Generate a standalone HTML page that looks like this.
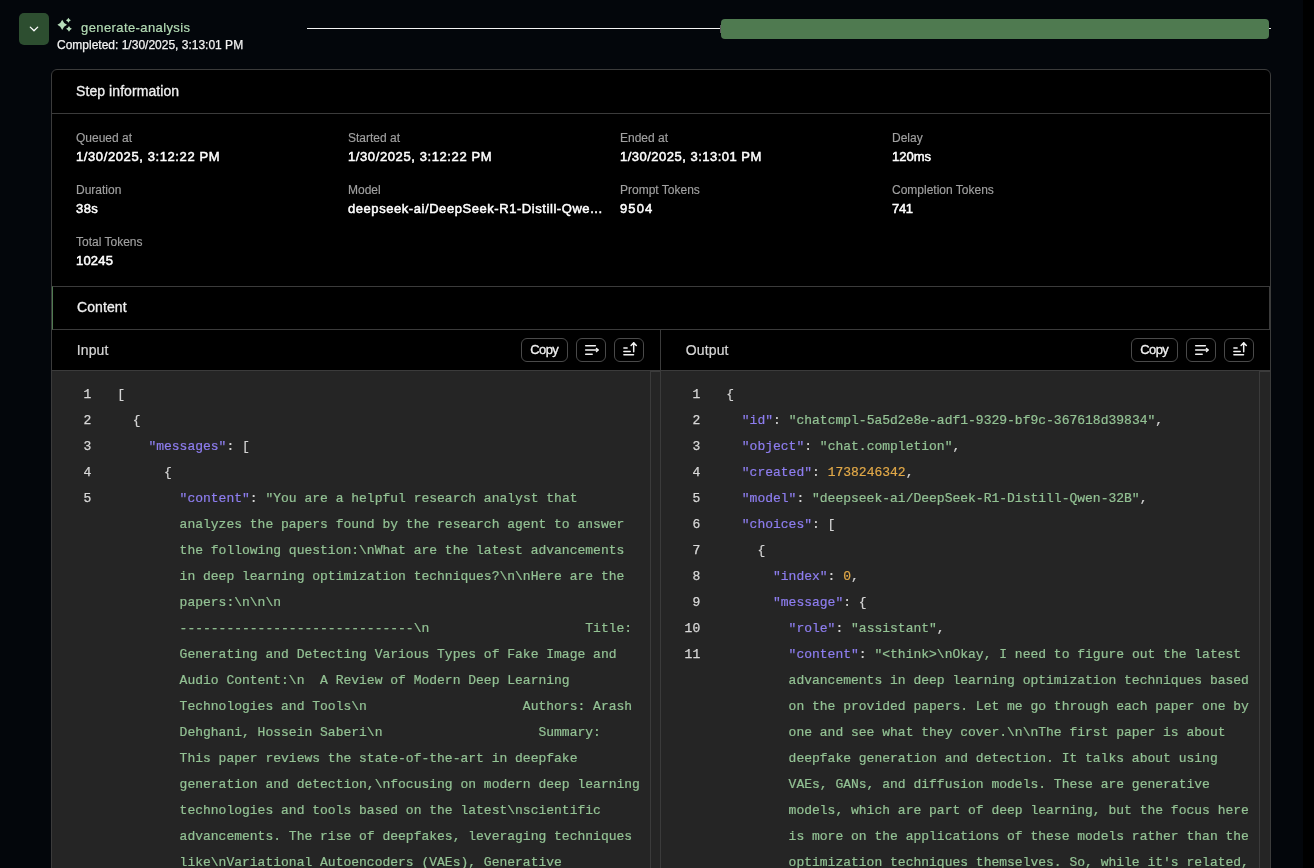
<!DOCTYPE html>
<html><head><meta charset="utf-8">
<style>
*{box-sizing:border-box;margin:0;padding:0}
html,body{width:1314px;height:868px;overflow:hidden;background:#03060b;font-family:"Liberation Sans",sans-serif}
.abs{position:absolute}
#gutter{left:1303px;top:0;width:11px;height:868px;background:#000}
#btn{left:19px;top:13px;width:30px;height:32px;border-radius:5px;background:#2d4e30}
#title{left:81px;top:20px;font-size:13px;line-height:16px;letter-spacing:0.4px;-webkit-text-stroke:0.2px #b3dbb4;color:#b3dbb4;white-space:nowrap}
#completed{left:57px;top:38px;font-size:12px;line-height:14px;color:#f2f2f2;-webkit-text-stroke:0.25px #f2f2f2;white-space:nowrap}
#tl{left:307px;top:28px;width:413px;height:1px;background:#f4f4f4}
#tlc{left:720px;top:25px;width:1px;height:8px;background:#5a5a5a}
#bar{left:721px;top:19px;width:548px;height:20px;border-radius:4px;background:#4f7a50}
#tick{left:1269px;top:28px;width:2px;height:1px;background:#e8e8e8}
#box{left:51px;top:69px;width:1220px;height:900px;border:1px solid #3b3b3b;border-radius:6px;background:#000;overflow:hidden}
.hdr{position:absolute;left:0;width:1218px;border-bottom:1px solid #3b3b3b}
.lbl{position:absolute;font-size:12px;line-height:14px;color:#a0a0a0;-webkit-text-stroke:0.15px #a0a0a0;white-space:nowrap}
.val{position:absolute;font-size:13px;line-height:15px;color:#fff;-webkit-text-stroke:0.5px #fff;white-space:nowrap}
.ph{position:absolute;font-size:14px;line-height:16px;color:#f0f0f0;-webkit-text-stroke:0.3px #f0f0f0;white-space:nowrap}
.panel{position:absolute;top:260px;width:608px;height:640px}
.pt{position:absolute;left:24.7px;top:11.5px;letter-spacing:0.15px;font-size:14px;line-height:16px;color:#d6d6d6;-webkit-text-stroke:0.2px #d6d6d6;white-space:nowrap}
.cbtn{position:absolute;top:8px;height:24px;border:1px solid #4a4a4a;border-radius:6px;background:#000}
.cbtn.copy{left:469px;width:47px;font-size:13px;line-height:21px;letter-spacing:-0.6px;text-indent:-0.6px;color:#f0f0f0;-webkit-text-stroke:0.3px #f0f0f0;text-align:center}
.cbtn svg{position:absolute;left:0;top:0}
.code{position:absolute;left:0;top:40px;width:608px;height:600px;background:#252525;border-top:1px solid #3b3b3b;overflow:hidden}
.sb{position:absolute;left:598px;top:0;width:10px;height:600px;border-left:1px solid #3b3b3b;border-top:1px solid #3b3b3b}
.lines{position:absolute;left:0;top:10.5px;width:598px}
.ln{position:absolute;left:0;width:39.2px;-webkit-text-stroke:0.25px currentColor;text-align:right;font-family:"Liberation Mono",monospace;font-size:13px;color:#d8d8d8;line-height:26px}
.cl{position:absolute;left:65.2px;-webkit-text-stroke:0.2px currentColor;font-family:"Liberation Mono",monospace;font-size:13px;color:#d4d4d4;line-height:26px;white-space:pre}
.k{color:#8e7ef0}.s{color:#93c294}.n{color:#e2a948}
#divider{position:absolute;left:608px;top:260px;width:1px;height:640px;background:#3b3b3b}
#chdr{position:absolute;left:0;top:216px;width:1218px;height:44px;border:1px solid #3b3b3b;border-left-color:#4f7a50}
</style></head><body>
<div id="root" style="position:absolute;left:0;top:0;width:1314px;height:868px;will-change:transform">
<div id="gutter" class="abs"></div>
<div id="btn" class="abs"><svg width="30" height="32" viewBox="0 0 30 32"><path d="M11.3 14.1 L15 17.8 L18.7 14.1" fill="none" stroke="#fff" stroke-width="1.3" stroke-linecap="round" stroke-linejoin="round"/></svg></div>
<svg class="abs" style="left:56px;top:16px" width="18" height="18" viewBox="0 0 18 18"><g fill="#b6dcb9">
<path d="M6.2 3.7 Q7.6 7.4 11 8.8 Q7.6 10.2 6.2 13.9 Q4.8 10.2 1.4 8.8 Q4.8 7.4 6.2 3.7Z"/>
<path d="M12.4 1.7 Q13.1 3.5 14.9 4.2 Q13.1 4.9 12.4 6.7 Q11.7 4.9 9.9 4.2 Q11.7 3.5 12.4 1.7Z"/>
<path d="M13 9.9 Q13.8 12 15.9 12.8 Q13.8 13.6 13 15.7 Q12.2 13.6 10.1 12.8 Q12.2 12 13 9.9Z"/>
</g></svg>
<div id="title" class="abs">generate-analysis</div>
<div id="completed" class="abs">Completed: 1/30/2025, 3:13:01 PM</div>
<div id="tl" class="abs"></div>
<div id="tlc" class="abs"></div>
<div id="bar" class="abs"></div>
<div id="tick" class="abs"></div>
<div id="box" class="abs">
  <div class="hdr" style="top:0;height:44px"></div>
  <div class="ph" style="left:24px;top:13px;letter-spacing:0.08px">Step information</div>
  <div class="lbl" style="left:24px;top:61px">Queued at</div>
  <div class="val" style="left:24px;top:79px;letter-spacing:0.6px">1/30/2025, 3:12:22 PM</div>
  <div class="lbl" style="left:296px;top:61px">Started at</div>
  <div class="val" style="left:296px;top:79px;letter-spacing:0.6px">1/30/2025, 3:12:22 PM</div>
  <div class="lbl" style="left:568px;top:61px">Ended at</div>
  <div class="val" style="left:568px;top:79px;letter-spacing:0.49px">1/30/2025, 3:13:01 PM</div>
  <div class="lbl" style="left:840px;top:61px">Delay</div>
  <div class="val" style="left:840px;top:79px">120ms</div>
  <div class="lbl" style="left:24px;top:113px">Duration</div>
  <div class="val" style="left:24px;top:131px;letter-spacing:0.4px">38s</div>
  <div class="lbl" style="left:296px;top:113px">Model</div>
  <div class="val" style="left:296px;top:131px;letter-spacing:0.56px">deepseek-ai/DeepSeek-R1-Distill-Qwe...</div>
  <div class="lbl" style="left:568px;top:113px">Prompt Tokens</div>
  <div class="val" style="left:568px;top:131px;letter-spacing:1.1px">9504</div>
  <div class="lbl" style="left:840px;top:113px">Completion Tokens</div>
  <div class="val" style="left:840px;top:131px;letter-spacing:-0.35px">741</div>
  <div class="lbl" style="left:24px;top:165px">Total Tokens</div>
  <div class="val" style="left:24px;top:183px;letter-spacing:0.18px">10245</div>
  <div id="chdr"></div>
  <div class="ph" style="left:25px;top:229px;letter-spacing:0.1px">Content</div>
  <div class="panel" style="left:0">
    <div class="pt">Input</div>
    <div class="cbtn copy">Copy</div>
    <div class="cbtn" style="left:524px;width:30px"><svg width="28" height="22" viewBox="0 0 28 22"><g fill="none" stroke="#f2f2f2" stroke-width="1.5" stroke-linecap="round" stroke-linejoin="round"><path d="M8.7 6.7h9.7"/><path d="M8.7 11h12.3"/><path d="M19.5 9.5l1.5 1.5-1.5 1.5"/><path d="M8.7 15.3h6.5"/></g></svg></div>
    <div class="cbtn" style="left:562px;width:30px"><svg width="28" height="22" viewBox="0 0 28 22"><g fill="none" stroke="#f2f2f2" stroke-width="1.5" stroke-linecap="round" stroke-linejoin="round"><path d="M8.9 8.9h3.2"/><path d="M8.9 12.4h6.3"/><path d="M8.9 15.7h9.6"/><path d="M18.7 12.7V3.9"/><path d="M16.1 6.5l2.6-2.6 2.6 2.6"/></g></svg></div>
    <div class="code"><div class="lines">
<div class="ln" style="top:0px">1</div>
<div class="cl" style="top:0px">[</div>
<div class="ln" style="top:26px">2</div>
<div class="cl" style="top:26px">  {</div>
<div class="ln" style="top:52px">3</div>
<div class="cl" style="top:52px">    <span class="k">&quot;messages&quot;</span>: [</div>
<div class="ln" style="top:78px">4</div>
<div class="cl" style="top:78px">      {</div>
<div class="ln" style="top:104px">5</div>
<div class="cl" style="top:104px">        <span class="k">&quot;content&quot;</span>: <span class="s">&quot;You are a helpful research analyst that</span></div>
<div class="cl" style="top:130px">        <span class="s">analyzes the papers found by the research agent to answer</span></div>
<div class="cl" style="top:156px">        <span class="s">the following question:\nWhat are the latest advancements</span></div>
<div class="cl" style="top:182px">        <span class="s">in deep learning optimization techniques?\n\nHere are the</span></div>
<div class="cl" style="top:208px">        <span class="s">papers:\n\n\n</span></div>
<div class="cl" style="top:234px">        <span class="s">------------------------------\n                    Title:</span></div>
<div class="cl" style="top:260px">        <span class="s">Generating and Detecting Various Types of Fake Image and</span></div>
<div class="cl" style="top:286px">        <span class="s">Audio Content:\n  A Review of Modern Deep Learning</span></div>
<div class="cl" style="top:312px">        <span class="s">Technologies and Tools\n                    Authors: Arash</span></div>
<div class="cl" style="top:338px">        <span class="s">Dehghani, Hossein Saberi\n                    Summary:</span></div>
<div class="cl" style="top:364px">        <span class="s">This paper reviews the state-of-the-art in deepfake</span></div>
<div class="cl" style="top:390px">        <span class="s">generation and detection,\nfocusing on modern deep learning</span></div>
<div class="cl" style="top:416px">        <span class="s">technologies and tools based on the latest\nscientific</span></div>
<div class="cl" style="top:442px">        <span class="s">advancements. The rise of deepfakes, leveraging techniques</span></div>
<div class="cl" style="top:468px">        <span class="s">like\nVariational Autoencoders (VAEs), Generative</span></div>
    </div><div class="sb"></div></div>
  </div>
  <div id="divider"></div>
  <div class="panel" style="left:609px;width:609px">
    <div class="pt">Output</div>
    <div style="position:absolute;left:1px;top:0"><div class="cbtn copy">Copy</div>
    <div class="cbtn" style="left:524px;width:30px"><svg width="28" height="22" viewBox="0 0 28 22"><g fill="none" stroke="#f2f2f2" stroke-width="1.5" stroke-linecap="round" stroke-linejoin="round"><path d="M8.7 6.7h9.7"/><path d="M8.7 11h12.3"/><path d="M19.5 9.5l1.5 1.5-1.5 1.5"/><path d="M8.7 15.3h6.5"/></g></svg></div>
    <div class="cbtn" style="left:562px;width:30px"><svg width="28" height="22" viewBox="0 0 28 22"><g fill="none" stroke="#f2f2f2" stroke-width="1.5" stroke-linecap="round" stroke-linejoin="round"><path d="M8.9 8.9h3.2"/><path d="M8.9 12.4h6.3"/><path d="M8.9 15.7h9.6"/><path d="M18.7 12.7V3.9"/><path d="M16.1 6.5l2.6-2.6 2.6 2.6"/></g></svg></div></div>
    <div class="code" style="width:609px"><div class="lines">
<div class="ln" style="top:0px">1</div>
<div class="cl" style="top:0px">{</div>
<div class="ln" style="top:26px">2</div>
<div class="cl" style="top:26px">  <span class="k">&quot;id&quot;</span>: <span class="s">&quot;chatcmpl-5a5d2e8e-adf1-9329-bf9c-367618d39834&quot;</span>,</div>
<div class="ln" style="top:52px">3</div>
<div class="cl" style="top:52px">  <span class="k">&quot;object&quot;</span>: <span class="s">&quot;chat.completion&quot;</span>,</div>
<div class="ln" style="top:78px">4</div>
<div class="cl" style="top:78px">  <span class="k">&quot;created&quot;</span>: <span class="n">1738246342</span>,</div>
<div class="ln" style="top:104px">5</div>
<div class="cl" style="top:104px">  <span class="k">&quot;model&quot;</span>: <span class="s">&quot;deepseek-ai/DeepSeek-R1-Distill-Qwen-32B&quot;</span>,</div>
<div class="ln" style="top:130px">6</div>
<div class="cl" style="top:130px">  <span class="k">&quot;choices&quot;</span>: [</div>
<div class="ln" style="top:156px">7</div>
<div class="cl" style="top:156px">    {</div>
<div class="ln" style="top:182px">8</div>
<div class="cl" style="top:182px">      <span class="k">&quot;index&quot;</span>: <span class="n">0</span>,</div>
<div class="ln" style="top:208px">9</div>
<div class="cl" style="top:208px">      <span class="k">&quot;message&quot;</span>: {</div>
<div class="ln" style="top:234px">10</div>
<div class="cl" style="top:234px">        <span class="k">&quot;role&quot;</span>: <span class="s">&quot;assistant&quot;</span>,</div>
<div class="ln" style="top:260px">11</div>
<div class="cl" style="top:260px">        <span class="k">&quot;content&quot;</span>: <span class="s">&quot;&lt;think&gt;\nOkay, I need to figure out the latest</span></div>
<div class="cl" style="top:286px">        <span class="s">advancements in deep learning optimization techniques based</span></div>
<div class="cl" style="top:312px">        <span class="s">on the provided papers. Let me go through each paper one by</span></div>
<div class="cl" style="top:338px">        <span class="s">one and see what they cover.\n\nThe first paper is about</span></div>
<div class="cl" style="top:364px">        <span class="s">deepfake generation and detection. It talks about using</span></div>
<div class="cl" style="top:390px">        <span class="s">VAEs, GANs, and diffusion models. These are generative</span></div>
<div class="cl" style="top:416px">        <span class="s">models, which are part of deep learning, but the focus here</span></div>
<div class="cl" style="top:442px">        <span class="s">is more on the applications of these models rather than the</span></div>
<div class="cl" style="top:468px">        <span class="s">optimization techniques themselves. So, while it&#x27;s related,</span></div>
    </div><div class="sb" style="width:11px"></div></div>
  </div>
</div>
</div>
</body></html>
